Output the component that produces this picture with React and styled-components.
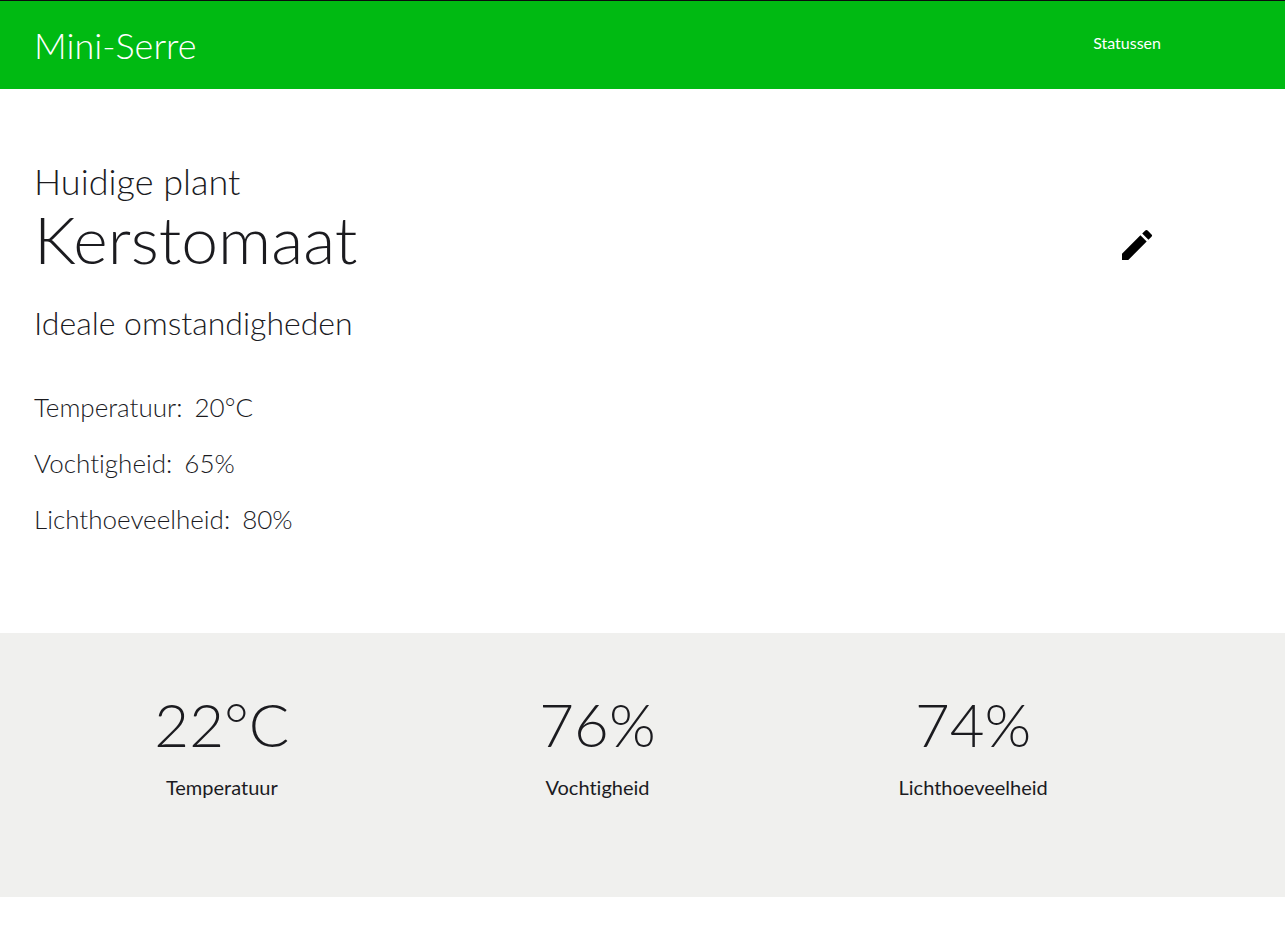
import React from 'react';
import styled, { createGlobalStyle } from 'styled-components';
import { MdEdit } from 'react-icons/md';

const GlobalStyle = createGlobalStyle`
  * { box-sizing: border-box; }
  body {
    margin: 0;
    background: #fff;
    color: #1b1b1f;
    font-family: Lato, sans-serif;
    font-weight: 300;
    font-variant-ligatures: none;
  }
  h1, h2, h3, p, dl, dd { margin: 0; font-weight: 300; }
`;

const Header = styled.header`
  display: flex;
  justify-content: space-between;
  align-items: center;
  border-top: 1px solid #0c0c0e;
  padding: 22px 124px 22px 34px;
  background: #00ba12;
  color: #fff;
`;

const Brand = styled.div`
  font-size: 36px;
  line-height: 44px;
`;

const Nav = styled.nav`
  padding-bottom: 4px;
`;

const NavLink = styled.a`
  color: inherit;
  font-size: 16px;
  line-height: 20px;
  font-weight: 400;
  text-decoration: none;
`;

const Plant = styled.section`
  display: flex;
  justify-content: space-between;
  align-items: flex-start;
  padding: 70px 128px 86px 34px;
`;

const Eyebrow = styled.p`
  font-size: 36px;
  line-height: 44px;
`;

const PlantName = styled.h1`
  font-size: 66px;
  line-height: 72px;
`;

const Subtitle = styled.h2`
  margin-top: 28px;
  font-size: 32px;
  line-height: 40px;
`;

const Conditions = styled.dl`
  margin-top: 36px;
`;

const Condition = styled.div`
  display: flex;
  gap: 12px;
  font-size: 26px;
  line-height: 56px;
`;

const EditButton = styled.button`
  display: flex;
  margin-top: 66px;
  padding: 0;
  border: 0;
  background: none;
  color: #000;
  cursor: pointer;
`;

const Readings = styled.section`
  display: grid;
  grid-template-columns: repeat(3, 1fr);
  padding: 52px 124px 94px 34px;
  background: #f0f0ee;
`;

const Reading = styled.div`
  display: flex;
  flex-direction: column;
  align-items: center;
`;

const Value = styled.p`
  font-size: 60px;
  line-height: 78px;
`;

const Label = styled.h3`
  margin-top: 8px;
  font-size: 20px;
  line-height: 32px;
  font-weight: 400;
`;

const conditions = [
  ['Temperatuur:', '20°C'],
  ['Vochtigheid:', '65%'],
  ['Lichthoeveelheid:', '80%'],
];

const readings = [
  ['22°C', 'Temperatuur'],
  ['76%', 'Vochtigheid'],
  ['74%', 'Lichthoeveelheid'],
];

export default function App() {
  return (
    <>
      <GlobalStyle />
      <Header>
        <Brand>Mini-Serre</Brand>
        <Nav><NavLink href="#statussen">Statussen</NavLink></Nav>
      </Header>
      <main>
        <Plant>
          <div>
            <Eyebrow>Huidige plant</Eyebrow>
            <PlantName>Kerstomaat</PlantName>
            <Subtitle>Ideale omstandigheden</Subtitle>
            <Conditions>
              {conditions.map(([name, value]) => (
                <Condition key={name}><dt>{name}</dt><dd>{value}</dd></Condition>
              ))}
            </Conditions>
          </div>
          <EditButton type="button" aria-label="Plant bewerken"><MdEdit size={40} /></EditButton>
        </Plant>
        <Readings id="statussen">
          {readings.map(([value, name]) => (
            <Reading key={name}><Value>{value}</Value><Label>{name}</Label></Reading>
          ))}
        </Readings>
      </main>
    </>
  );
}
